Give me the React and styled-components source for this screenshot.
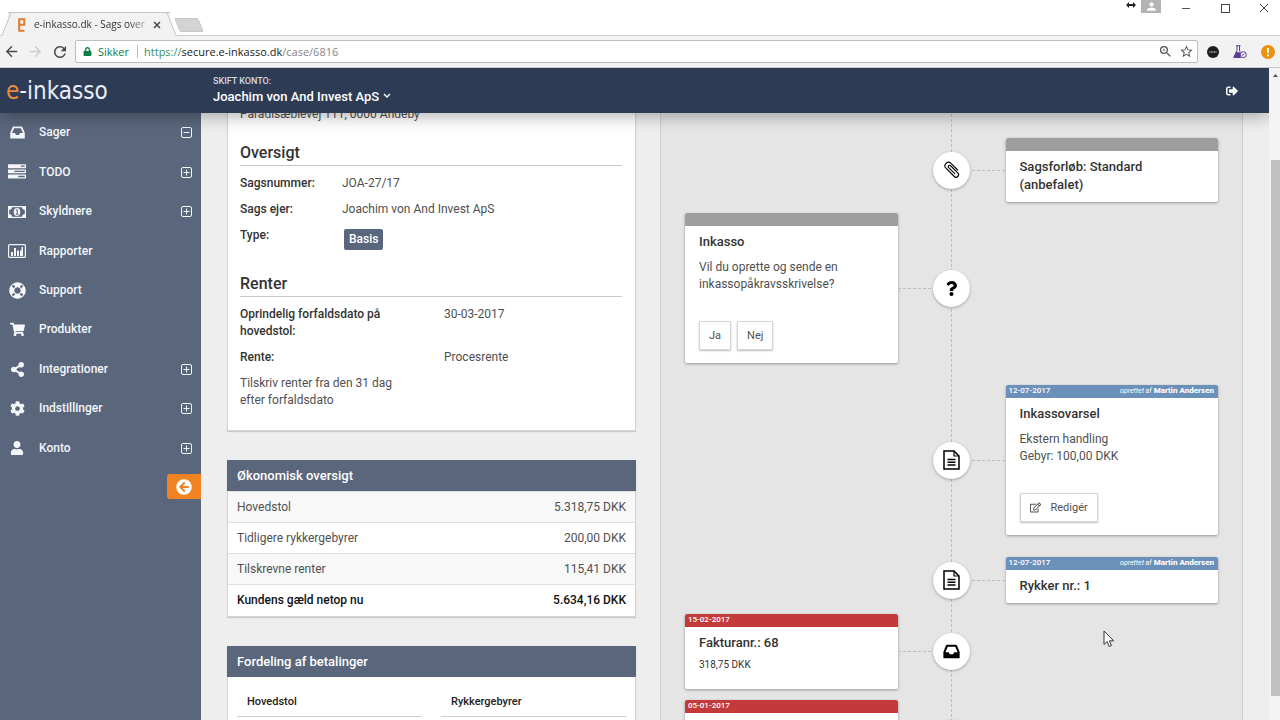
import React from "react";
import styled, { createGlobalStyle } from "styled-components";
import {
  FaShoppingCart,
  FaShareAlt,
  FaCog,
  FaUser,
  FaLifeRing,
  FaArrowCircleLeft,
  FaSignOutAlt,
  FaQuestion,
  FaRegEdit,
  FaLock,
} from "react-icons/fa";
import { MdArrowBack, MdArrowForward, MdRefresh, MdPerson, MdZoomIn, MdStarBorder } from "react-icons/md";

const InboxIcon = ({ size }) => (
  <svg width={size} height={size} viewBox="0 0 1792 1792" fill="currentColor">
    <path d="M1151 960h316q-1-3-2.5-8.5t-2.5-7.5l-212-496h-708l-212 496q-1 3-2.5 8.5t-2.5 7.5h316l95 192h320zm513 30v482q0 26-19 45t-45 19h-1408q-26 0-45-19t-19-45v-482q0-62 25-123l238-552q10-25 36.5-42t52.5-17h832q26 0 52.5 17t36.5 42l238 552q25 61 25 123z" />
  </svg>
);

const TasksIcon = () => (
  <svg width="18" height="18" viewBox="0 0 1792 1792" fill="currentColor">
    <path d="M1024 1408h640v-128h-640v128zm-384-512h1024v-128h-1024v128zm640-512h384v-128h-384v128zm512 832v256q0 26-19 45t-45 19h-1664q-26 0-45-19t-19-45v-256q0-26 19-45t45-19h1664q26 0 45 19t19 45zm0-512v256q0 26-19 45t-45 19h-1664q-26 0-45-19t-19-45v-256q0-26 19-45t45-19h1664q26 0 45 19t19 45zm0-512v256q0 26-19 45t-45 19h-1664q-26 0-45-19t-19-45v-256q0-26 19-45t45-19h1664q26 0 45 19t19 45z" />
  </svg>
);

const MoneyIcon = () => (
  <svg width="18" height="12" viewBox="0 0 18 12" fill="none" stroke="currentColor">
    <rect x="0.6" y="0.6" width="16.8" height="10.8" strokeWidth="1.2" />
    <path d="M1 1h3.2Q4 3.6 1 4zM17 1h-3.2q.2 2.6 3.2 3zM1 11h3.2Q4 8.4 1 8zM17 11h-3.2q.2-2.6 3.2-3z" fill="currentColor" stroke="none" />
    <ellipse cx="9" cy="6" rx="3.3" ry="4" fill="currentColor" stroke="none" />
    <path d="M7.9 4.3l1.3-.8v4.7M7.7 8.3h2.8" stroke="#59667c" strokeWidth="1" />
  </svg>
);

const ChartIcon = () => (
  <svg width="18" height="14" viewBox="0 0 18 14" fill="currentColor">
    <rect x="0.6" y="0.6" width="16.8" height="12.8" rx="1" fill="none" stroke="currentColor" strokeWidth="1.2" />
    <path d="M3 8h2v4H3zM6 4h2v8H6zM9 6.5h2V12H9zM12 6.5h1.5V12H12zM13.5 3H15v9h-1.500z" />
  </svg>
);

const ToggleIcon = ({ open }) => (
  <svg width="11" height="11" viewBox="0 0 11 11" fill="none" stroke="currentColor">
    <rect x="0.5" y="0.5" width="10" height="10" rx="1.5" />
    <path d={open ? "M2.5 5.5h6" : "M2.5 5.5h6M5.5 2.5v6"} />
  </svg>
);

const ClipIcon = () => (
  <svg width="20" height="20" viewBox="-10 -10 20 20" fill="none" stroke="currentColor" strokeWidth="1.1" strokeLinecap="round">
    <path transform="rotate(45)" d="M4.500 .7H-4a1.350 1.350 0 0 1 0-2.700H6.200a2.500 2.500 0 0 1 0 5H-5.500a3.500 3.500 0 0 1 0-7H4" />
  </svg>
);

const FileIcon = () => (
  <svg width="17" height="20" viewBox="0 0 17 20" fill="none" stroke="currentColor" strokeWidth="1.5">
    <path d="M1 1h10l5 5v13H1z" />
    <path d="M11 1v5h5" strokeWidth="1.2" />
    <path d="M4.5 9.5h8M4.5 12.2h8M4.5 15h8" />
  </svg>
);

const menu = [
  { label: "Sager", icon: <InboxIcon size={17} />, toggle: "open" },
  { label: "TODO", icon: <TasksIcon />, toggle: "closed" },
  { label: "Skyldnere", icon: <MoneyIcon />, toggle: "closed" },
  { label: "Rapporter", icon: <ChartIcon /> },
  { label: "Support", icon: <FaLifeRing size={17} /> },
  { label: "Produkter", icon: <FaShoppingCart size={15} /> },
  { label: "Integrationer", icon: <FaShareAlt size={15} />, toggle: "closed" },
  { label: "Indstillinger", icon: <FaCog size={15} />, toggle: "closed" },
  { label: "Konto", icon: <FaUser size={14} />, toggle: "closed" },
];

const economy = [
  ["Hovedstol", "5.318,75 DKK"],
  ["Tidligere rykkergebyrer", "200,00 DKK"],
  ["Tilskrevne renter", "115,41 DKK"],
  ["Kundens gæld netop nu", "5.634,16 DKK"],
];

const Browser = () => (
  <Chrome>
    <TabStrip>
      <Tab>
        <Favicon viewBox="0 0 8 14">
          <path d="M6.5 12.8H1.2V1.2h5.1v5.600H1.2" />
        </Favicon>
        <TabTitle>e-inkasso.dk - Sags over</TabTitle>
        <TabClose aria-label="Luk fane">
          <svg width="8" height="8" viewBox="0 0 8 8" stroke="#444" strokeWidth="1.5">
            <path d="M1 1l6 6M7 1L1 7" />
          </svg>
        </TabClose>
      </Tab>
      <NewTab aria-label="Ny fane" />
      <WindowButtons>
        <svg width="10" height="10" viewBox="0 0 10 10" fill="#222">
          <path d="M0 5l3-3v2h4V2l3 3-3 3V6H3v2z" />
        </svg>
        <Profile>
          <MdPerson size={13} />
        </Profile>
        <WindowButton aria-label="Minimer">
          <svg width="10" height="10" viewBox="0 0 10 10" stroke="#555">
            <path d="M1 5.5h8" />
          </svg>
        </WindowButton>
        <WindowButton aria-label="Maksimer">
          <svg width="10" height="10" viewBox="0 0 10 10" stroke="#444" fill="none">
            <rect x="1.5" y="1.5" width="8" height="8" />
          </svg>
        </WindowButton>
        <WindowButton aria-label="Luk">
          <svg width="10" height="10" viewBox="0 0 10 10" stroke="#444">
            <path d="M1 1l8 8M9 1L1 9" />
          </svg>
        </WindowButton>
      </WindowButtons>
    </TabStrip>
    <Toolbar>
      <ToolButton aria-label="Tilbage">
        <MdArrowBack size={17} />
      </ToolButton>
      <ToolButton aria-label="Frem" $dim>
        <MdArrowForward size={17} />
      </ToolButton>
      <ToolButton aria-label="Genindlæs">
        <MdRefresh size={18} />
      </ToolButton>
      <AddressBar>
        <Secure>
          <FaLock size={9} />
          Sikker
        </Secure>
        <Url>
          <i>https://</i>
          <b>secure.e-inkasso.dk</b>
          /case/6816
        </Url>
        <MdZoomIn size={15} />
        <MdStarBorder size={15} />
      </AddressBar>
      <Extensions>
        <svg width="12" height="12" viewBox="0 0 12 12">
          <circle cx="6" cy="6" r="6" fill="#1d1d1d" />
          <path d="M2.5 6h7" stroke="#aaa" strokeWidth="1.5" strokeDasharray="1 .5" />
        </svg>
        <svg width="14" height="14" viewBox="0 0 14 14" fill="none" stroke="#5b3b9a">
          <path d="M3 .7h4.5M4 1v4.5L.8 12.5h7M6.5 1v4.5l1 2" />
          <path d="M3.3 7.5L1 12.5h6V8z" fill="#5b3b9a" />
          <circle cx="10.3" cy="9.7" r="3" fill="#f2f2f2" />
          <path d="M9.2 10.7l2.2-2" />
        </svg>
        <svg width="14" height="14" viewBox="0 0 14 14">
          <circle cx="7" cy="7" r="7" fill="#ea930f" />
          <path d="M7 3v5M7 9.5v1.7" stroke="#fff" strokeWidth="1.8" />
        </svg>
      </Extensions>
    </Toolbar>
  </Chrome>
);

const Step = ({ side, tone, date, by, icon, title, children }) => (
  <StepRow $side={side}>
    <StepCard $side={side}>
      <StepBar $tone={tone}>
        <span>{date}</span>
        {by && (
          <span>
            <em>oprettet af</em> <strong>{by}</strong>
          </span>
        )}
      </StepBar>
      <StepBody>
        {title && <h3>{title}</h3>}
        {children}
      </StepBody>
    </StepCard>
    <Node $side={side}>
      <Circle>{icon}</Circle>
    </Node>
  </StepRow>
);

const App = () => {
  return (
    <Screen>
      <GlobalStyle />
      <Browser />
      <Viewport>
        <Page>
          <Header>
            <Logo href="#">
              <span>e</span>-inkasso
            </Logo>
            <Account>
              <small>SKIFT KONTO:</small>
              <AccountButton>
                Joachim von And Invest ApS
                <svg width="8" height="6" viewBox="0 0 8 6" fill="none" stroke="currentColor" strokeWidth="1.4">
                  <path d="M1 1l3 3 3-3" />
                </svg>
              </AccountButton>
            </Account>
            <LogOut href="#" aria-label="Log ud">
              <FaSignOutAlt size={12} />
            </LogOut>
          </Header>
          <Body>
            <Sidebar>
              <Menu>
                {menu.map((item) => (
                  <li key={item.label}>
                    <MenuLink href="#">
                      <MenuIcon>{item.icon}</MenuIcon>
                      {item.label}
                      {item.toggle && (
                        <MenuToggle>
                          <ToggleIcon open={item.toggle === "open"} />
                        </MenuToggle>
                      )}
                    </MenuLink>
                  </li>
                ))}
              </Menu>
              <Collapse aria-label="Skjul menu">
                <FaArrowCircleLeft size={16} />
              </Collapse>
            </Sidebar>
            <Content>
              <Column>
                <Card>
                  <Details>
                    <Address>Paradisæblevej 111, 0000 Andeby</Address>
                    <h2>Oversigt</h2>
                    <Facts $label="102px">
                      <dt>Sagsnummer:</dt>
                      <dd>JOA-27/17</dd>
                      <dt>Sags ejer:</dt>
                      <dd>Joachim von And Invest ApS</dd>
                      <dt>Type:</dt>
                      <dd>
                        <Badge>Basis</Badge>
                      </dd>
                    </Facts>
                    <h2>Renter</h2>
                    <Facts $label="204px">
                      <dt>Oprindelig forfaldsdato på hovedstol:</dt>
                      <dd>30-03-2017</dd>
                      <dt>Rente:</dt>
                      <dd>Procesrente</dd>
                    </Facts>
                    <Note>Tilskriv renter fra den 31 dag efter forfaldsdato</Note>
                  </Details>
                </Card>
                <Card>
                  <CardTitle>Økonomisk oversigt</CardTitle>
                  <Table>
                    <tbody>
                      {economy.map(([label, amount]) => (
                        <tr key={label}>
                          <th scope="row">{label}</th>
                          <td>{amount}</td>
                        </tr>
                      ))}
                    </tbody>
                  </Table>
                </Card>
                <Card>
                  <CardTitle>Fordeling af betalinger</CardTitle>
                  <Split>
                    <h4>Hovedstol</h4>
                    <h4>Rykkergebyrer</h4>
                  </Split>
                </Card>
              </Column>
              <Timeline>
                <Step side="right" tone="#9e9e9e" icon={<ClipIcon />} title="Sagsforløb: Standard (anbefalet)" />
                <Step side="left" tone="#9e9e9e" icon={<FaQuestion size={15} />} title="Inkasso">
                  <p>Vil du oprette og sende en inkassopåkravsskrivelse?</p>
                  <Actions>
                    <Button>Ja</Button>
                    <Button>Nej</Button>
                  </Actions>
                </Step>
                <Step side="right" tone="#6b91ba" date="12-07-2017" by="Martin Andersen" icon={<FileIcon />} title="Inkassovarsel">
                  <p>
                    Ekstern handling
                    <br />
                    Gebyr: 100,00 DKK
                  </p>
                  <Actions>
                    <Button>
                      <FaRegEdit size={11} />
                      Redigér
                    </Button>
                  </Actions>
                </Step>
                <Step side="right" tone="#6b91ba" date="12-07-2017" by="Martin Andersen" icon={<FileIcon />} title="Rykker nr.: 1" />
                <Step side="left" tone="#c43a3a" date="15-02-2017" icon={<InboxIcon size={19} />} title="Fakturanr.: 68">
                  <Amount>318,75 DKK</Amount>
                </Step>
                <Step side="left" tone="#c43a3a" date="05-01-2017" icon={<InboxIcon size={19} />}>
                  <Blank />
                </Step>
              </Timeline>
            </Content>
          </Body>
        </Page>
        <Scrollbar>
          <svg width="5" height="3" viewBox="0 0 5 3" fill="#555">
            <path d="M0 3L2.5 0 5 3z" />
          </svg>
          <Thumb />
        </Scrollbar>
      </Viewport>
      <Pointer viewBox="0 0 12 18">
        <path d="M1 1v13.5l3.2-3 2 5 2.3-1-2.1-4.700h4.300z" fill="#fff" stroke="#333" />
      </Pointer>
    </Screen>
  );
};

export default App;

const GlobalStyle = createGlobalStyle`
  * {
    box-sizing: border-box;
  }
  body {
    margin: 0;
    font: 12px/17px Roboto, "Liberation Sans", sans-serif;
    color: #505050;
    background: #eee;
  }
  h2, h3, h4, p, dl, dd, ul {
    margin: 0;
    padding: 0;
    list-style: none;
  }
  button {
    font: inherit;
    color: inherit;
    border: none;
    padding: 0;
    background: none;
    cursor: pointer;
  }
  a {
    color: inherit;
    text-decoration: none;
  }
  svg {
    flex-shrink: 0;
  }
`;

const Screen = styled.div`
  height: 100vh;
  display: flex;
  flex-direction: column;
  overflow: hidden;
`;

const Chrome = styled.div`
  font-family: "Open Sans", "Noto Sans", sans-serif;
  background: #f2f2f2;
`;

const TabStrip = styled.div`
  height: 36px;
  display: flex;
  align-items: flex-end;
  padding-left: 8px;
  background: #fff;
  border-bottom: 1px solid #cfcfcf;
`;

const Tab = styled.div`
  position: relative;
  z-index: 1;
  width: 162px;
  height: 24px;
  margin-bottom: -1px;
  display: flex;
  align-items: center;
  padding: 0 9px 0 10px;
  border-top: 1px solid #c4c4c4;
  background: #f2f2f2;

  &::before,
  &::after {
    content: "";
    position: absolute;
    z-index: -1;
    top: -1px;
    bottom: 0;
    width: 12px;
    background: #f2f2f2;
  }
  &::before {
    left: -2px;
    transform: skewX(-22deg);
    border-left: 1px solid #c4c4c4;
    border-top: 1px solid #c4c4c4;
  }
  &::after {
    right: -2px;
    transform: skewX(22deg);
    border-right: 1px solid #c4c4c4;
    border-top: 1px solid #c4c4c4;
  }
`;

const Favicon = styled.svg`
  width: 8px;
  height: 14px;
  fill: none;
  stroke: #e07b2c;
  stroke-width: 2;
`;

const TabTitle = styled.span`
  flex: 1;
  margin-left: 8px;
  white-space: nowrap;
  font-size: 10px;
  color: #333;
  mask-image: linear-gradient(to right, #000 80%, transparent);
`;

const TabClose = styled.button`
  display: flex;
`;

const NewTab = styled.button`
  width: 24px;
  height: 14px;
  margin: 0 0 3px 7px;
  background: #d3d3d3;
  border: 1px solid #c6c6c6;
  border-radius: 2px;
  transform: skewX(22deg);
`;

const WindowButtons = styled.div`
  align-self: flex-start;
  display: flex;
  align-items: flex-start;
  margin-left: auto;
  padding-right: 11px;
`;

const Profile = styled.span`
  width: 20px;
  height: 13px;
  margin: 0 20px 0 5px;
  display: flex;
  align-items: center;
  justify-content: center;
  color: #fff;
  background: #b3b3b3;
`;

const WindowButton = styled.button`
  display: flex;
  padding-top: 3px;

  & + & {
    margin-left: 29px;
  }
`;

const Toolbar = styled.div`
  height: 32px;
  display: flex;
  align-items: center;
  padding: 0 5px 0 3px;
  border-bottom: 1px solid #c9c9c9;
`;

const ToolButton = styled.button`
  display: flex;
  width: 24px;
  color: ${({ $dim }) => ($dim ? "#ccc" : "#4a4a4a")};
`;

const AddressBar = styled.div`
  flex: 1;
  height: 23px;
  display: flex;
  align-items: center;
  gap: 6px;
  padding: 0 3px 0 7px;
  color: #555;
  background: #fff;
  border: 1px solid #bdbdbd;
  border-radius: 2px;
`;

const Secure = styled.span`
  display: flex;
  align-items: center;
  gap: 6px;
  padding-right: 8px;
  border-right: 1px solid #bbb;
  line-height: 13px;
  font-size: 11px;
  color: #0b8043;
`;

const Url = styled.span`
  flex: 1;
  font-size: 11px;
  color: #858585;

  i {
    font-style: normal;
    color: #3c8f63;
  }
  b {
    font-weight: 400;
    color: #222;
  }
`;

const Extensions = styled.div`
  display: flex;
  align-items: center;
  gap: 14px;
  padding-left: 9px;
`;

const Viewport = styled.div`
  flex: 1;
  min-height: 0;
  display: flex;
`;

const Page = styled.div`
  flex: 1;
  min-width: 0;
  display: flex;
  flex-direction: column;
  overflow: hidden;
`;

const Header = styled.header`
  position: relative;
  z-index: 2;
  height: 45px;
  flex-shrink: 0;
  display: flex;
  align-items: center;
  color: #fff;
  background: #2d3b55;
  box-shadow: 0 2px 18px rgba(0, 0, 0, 0.35);
`;

const Logo = styled.a`
  width: 213px;
  padding-left: 6px;
  font: 24px/40px "DejaVu Sans Condensed", "DejaVu Sans", sans-serif;
  color: #e8edf7;

  span {
    color: #f0893a;
  }
`;

const Account = styled.div`
  flex: 1;
  padding-bottom: 3px;

  small {
    display: block;
    font-size: 9px;
    line-height: 14px;
    font-weight: 500;
    color: #d5dae4;
  }
`;

const AccountButton = styled.button`
  display: flex;
  align-items: center;
  gap: 4px;
  font-size: 13px;
  font-weight: 500;
`;

const LogOut = styled.a`
  display: flex;
  padding-right: 31px;
`;

const Body = styled.div`
  flex: 1;
  min-height: 0;
  display: flex;
`;

const Sidebar = styled.nav`
  width: 201px;
  flex-shrink: 0;
  color: #f4f6fa;
  background: #59667c;
`;

const Menu = styled.ul`
  display: flex;
  flex-direction: column;
  height: 355px;

  li {
    flex: 1;
  }
`;

const MenuLink = styled.a`
  height: 100%;
  display: flex;
  align-items: center;
  padding-right: 9px;
  font-weight: 500;
`;

const MenuIcon = styled.span`
  width: 34px;
  margin-right: 5px;
  display: flex;
  justify-content: center;
`;

const MenuToggle = styled.span`
  display: flex;
  margin-left: auto;
`;

const Collapse = styled.button`
  width: 34px;
  height: 25px;
  margin: 6px 0 0 auto;
  display: flex;
  align-items: center;
  justify-content: center;
  color: #fff;
  background: #f28322;
  border-radius: 3px 0 0 3px;
`;

/* the page is scrolled, so its top sits behind the header */
const Content = styled.main`
  flex: 1;
  min-width: 0;
  display: grid;
  grid-template-columns: 409fr 583fr;
  gap: 24px;
  margin-top: -20px;
  padding: 0 26px;
`;

const Column = styled.div`
  display: flex;
  flex-direction: column;
  gap: 29px;
`;

const Card = styled.section`
  background: #fff;
  border: 1px solid #d6d6d6;
  border-top: none;
  box-shadow: 0 1px 1px rgba(0, 0, 0, 0.15);
`;

const Details = styled.div`
  padding: 13px 13px 12px 12px;

  h2 {
    margin: 15px 0 9px;
    padding-bottom: 2px;
    border-bottom: 1px solid #c8c8c8;
    font-size: 16px;
    line-height: 20px;
    font-weight: 500;
    color: #333;
  }
`;

const Address = styled.p`
  padding-bottom: 5px;
`;

const Facts = styled.dl`
  display: grid;
  grid-template-columns: ${({ $label }) => $label} 1fr;
  row-gap: 9px;
  padding-bottom: 9px;

  dt {
    padding-right: 20px;
    font-weight: 500;
    color: #333;
  }
`;

const Badge = styled.span`
  display: inline-block;
  margin: 2px 0 0 2px;
  padding: 2px 5px;
  vertical-align: top;
  font-weight: 500;
  color: #fff;
  background: #59667c;
  border-radius: 2px;
`;

const Note = styled.p`
  width: 174px;
  padding-bottom: 9px;
`;

const CardTitle = styled.h4`
  padding: 7px 10px;
  margin: 0 -1px;
  font-size: 13px;
  font-weight: 500;
  color: #fff;
  background: #59667c;
`;

const Table = styled.table`
  width: 100%;
  border-collapse: collapse;

  tr {
    height: 31px;
    border-top: 1px solid #e0e0e0;
  }
  tr:nth-child(odd) {
    background: #f8f8f8;
  }
  th,
  td {
    padding: 0 9px;
    font-weight: 400;
    text-align: left;
  }
  td {
    text-align: right;
  }
  tr:last-child th,
  tr:last-child td {
    font-weight: 500;
    color: #111;
  }
`;

const Split = styled.div`
  display: grid;
  grid-template-columns: 1fr 1fr;
  gap: 19px;
  min-height: 80px;
  align-items: start;
  padding: 16px 9px;

  h4 {
    padding: 0 10px 6px;
    border-bottom: 1px solid #d0d0d0;
    font-size: 11px;
    font-weight: 500;
    color: #222;
  }
`;

const Timeline = styled.section`
  padding: 22px 24px;
  border: 1px solid #cfcfcf;
  background:
    repeating-linear-gradient(#bdbdbd 0 3px, transparent 3px 5px) center / 1px 100% no-repeat,
    #e5e5e5;
`;

const StepRow = styled.div`
  display: grid;
  grid-template-columns: 1fr 108px 1fr;
  align-items: center;
  margin-top: ${({ $side }) => ($side === "left" ? "11px" : "22px")};
`;

const StepCard = styled.article`
  grid-row: 1;
  grid-column: ${({ $side }) => ($side === "left" ? 1 : 3)};
  overflow: hidden;
  background: #fff;
  border-radius: 2px;
  box-shadow: 0 1px 3px rgba(0, 0, 0, 0.35);
`;

const StepBar = styled.div`
  height: 13px;
  display: flex;
  justify-content: space-between;
  padding: 0 4px 0 3px;
  font-size: 8px;
  line-height: 12px;
  font-weight: 500;
  color: #fff;
  background: ${({ $tone }) => $tone};

  em {
    font-size: 7px;
    font-weight: 400;
  }
  strong {
    font-weight: 800;
  }
`;

const StepBody = styled.div`
  padding: 7px 14px 8px;

  h3 {
    font-size: 13px;
    line-height: 18px;
    font-weight: 500;
    color: #333;
  }
  p {
    margin-top: 8px;
  }
`;

const Node = styled.div`
  grid-row: 1;
  grid-column: 2;
  display: flex;
  justify-content: center;
  background: repeating-linear-gradient(90deg, #bdbdbd 0 3px, transparent 3px 5px)
    ${({ $side }) => $side} center / 50% 1px no-repeat;
`;

const Circle = styled.span`
  width: 37px;
  height: 37px;
  display: flex;
  align-items: center;
  justify-content: center;
  color: #000;
  background: #fff;
  border-radius: 50%;
  box-shadow: 0 1px 3px rgba(0, 0, 0, 0.3);
`;

const Actions = styled.div`
  display: flex;
  gap: 6px;
  padding: 28px 0 5px;
`;

const Button = styled.button`
  height: 29px;
  display: flex;
  align-items: center;
  gap: 10px;
  padding: 0 9px;
  font-size: 11px;
  background: #fff;
  border: 1px solid #d5d5d5;
  border-radius: 1px;
  box-shadow: 0 1px 2px rgba(0, 0, 0, 0.25);
`;

const Amount = styled.div`
  padding: 4px 0 8px;
  font-size: 10px;
  color: #333;
`;

const Blank = styled.div`
  height: 48px;
`;

const Scrollbar = styled.div`
  width: 11px;
  padding: 6px 0 24px 2px;
  display: flex;
  flex-direction: column;
  align-items: center;
  background: #f3f3f3;
`;

const Thumb = styled.div`
  flex: 1;
  width: 100%;
  margin-top: 83px;
  background: #c1c1c1;
`;

const Pointer = styled.svg`
  position: fixed;
  left: 1103px;
  top: 630px;
  width: 12px;
  height: 18px;
  pointer-events: none;
`;
